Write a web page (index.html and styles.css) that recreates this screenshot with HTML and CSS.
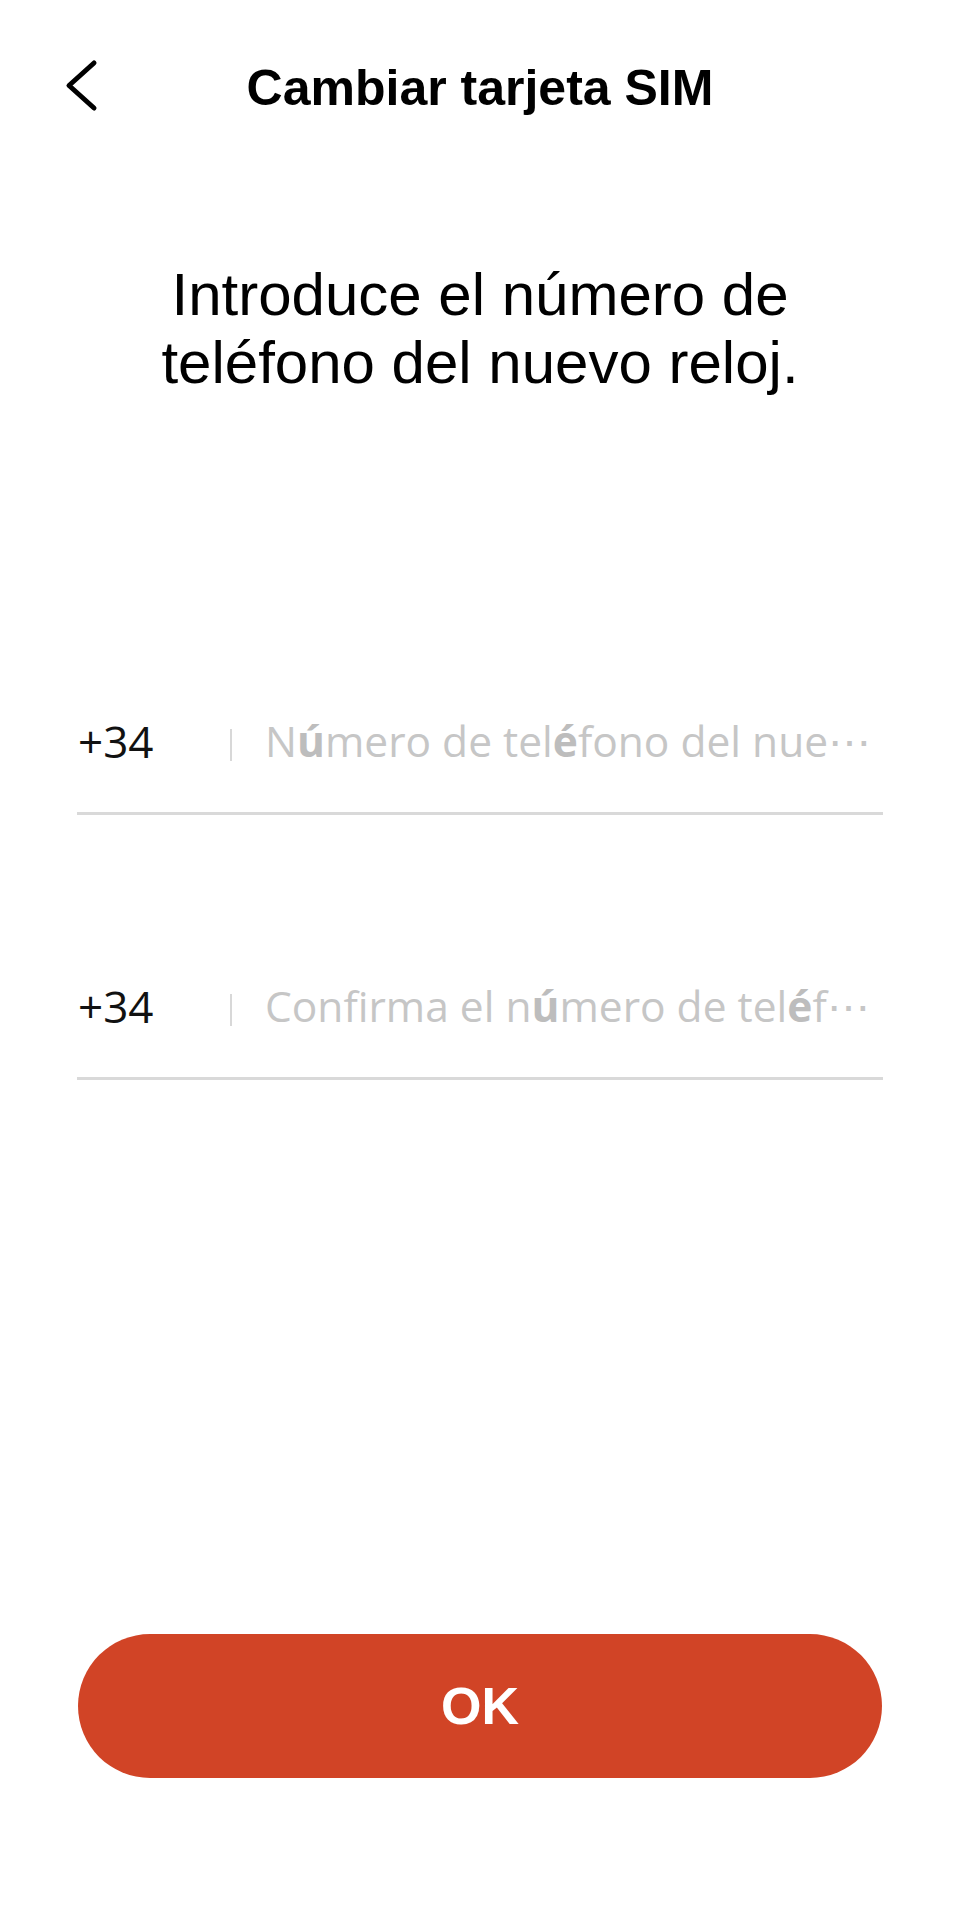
FILE: index.html
```html
<!DOCTYPE html>
<html lang="es">
<head>
    <meta charset="UTF-8">
    <meta name="viewport" content="width=device-width, initial-scale=1.0">
    <title>Cambiar tarjeta SIM</title>
    <link rel="stylesheet" href="styles.css">
</head>
<body>
    <header class="top-bar">
        <button class="back-btn" aria-label="Atrás">
            <svg width="36" height="60" viewBox="0 0 36 60">
                <path d="M30 5 L5 27.5 L30 50" fill="none" stroke="#000" stroke-width="5" stroke-linecap="round" stroke-linejoin="round"/>
            </svg>
        </button>
        <h1 class="title">Cambiar tarjeta SIM</h1>
        <span></span>
    </header>

    <h2 class="prompt">Introduce el número de<br>teléfono del nuevo reloj.</h2>

    <div class="phone-row first">
        <span class="code">+34</span>
        <span class="divider"></span>
        <span class="placeholder">N<b>ú</b>mero de tel<b>é</b>fono del nue⋯</span>
    </div>

    <div class="phone-row">
        <span class="code">+34</span>
        <span class="divider"></span>
        <span class="placeholder">Confirma el n<b>ú</b>mero de tel<b>é</b>f⋯</span>
    </div>

    <button class="ok-btn">OK</button>
</body>
</html>
```

FILE: styles.css
```css
body {
    margin: 0;
    padding: 0;
    background-color: #fff;
    color: #000;
    font-family: "Liberation Sans", Arial, sans-serif;
}

.top-bar {
    display: grid;
    grid-template-columns: 1fr auto 1fr;
    align-items: start;
    padding: 58px 0 0 64px;
    height: 60px;
}

.back-btn {
    background: none;
    border: none;
    padding: 0;
    width: 36px;
    height: 60px;
    cursor: pointer;
}

.back-btn svg {
    display: block;
}

.title {
    margin: 0 0 0 -64px;
    font-size: 50px;
    line-height: 60px;
    font-weight: bold;
    text-align: center;
}

.prompt {
    margin: 143px 0 0;
    font-size: 60px;
    line-height: 68px;
    font-weight: normal;
    text-align: center;
}

.phone-row {
    display: flex;
    align-items: center;
    margin: 161px 77px 0;
    padding-bottom: 41px;
    border-bottom: 3px solid #d9d9d9;
    font-family: "Open Sans", "Noto Sans", sans-serif;
    font-size: 44px;
    line-height: 60px;
    white-space: nowrap;
}

.phone-row.first {
    margin-top: 314px;
}

.code {
    flex-shrink: 0;
    width: 153px;
    padding-left: 1px;
    box-sizing: border-box;
    color: #111;
}

.divider {
    flex-shrink: 0;
    width: 2px;
    height: 32px;
    margin: 8px 33px 0 0;
    background-color: #d8d8d8;
}

.placeholder {
    min-width: 0;
    overflow: hidden;
    font-size: 42.5px;
    color: #c6c6c6;
}

.placeholder b {
    font-weight: 700;
    color: #bdbdbd;
}

.ok-btn {
    display: block;
    width: 804px;
    height: 144px;
    margin: 554px auto 0;
    border: none;
    border-radius: 72px;
    background-color: #d14426;
    color: #fff;
    font-family: "Liberation Sans", Arial, sans-serif;
    font-size: 52px;
    font-weight: bold;
    cursor: pointer;
}
```
